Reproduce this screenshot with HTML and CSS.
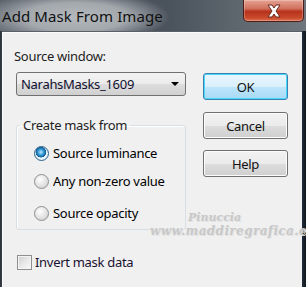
FILE: index.html
```html
<!DOCTYPE html>
<html lang="en">
<head>
    <meta charset="UTF-8">
    <title>Add Mask From Image</title>
    <link rel="stylesheet" href="styles.css">
</head>
<body>

    <div class="window">
        <div class="titlebar">
            <span class="title">Add Mask From Image</span>
            <div class="close-btn">
                <svg width="22" height="16" viewBox="0 0 22 16">
                    <path d="M5 2 L9 2 L11 5 L13 2 L17 2 L13 8 L17 14 L13 14 L11 11 L9 14 L5 14 L9 8 Z"
                          fill="#fff" stroke="#6b2a20" stroke-width="1"/>
                </svg>
            </div>
        </div>

        <div class="client">
            <div class="form">
                <div class="label">Source window:</div>
                <div class="select">
                    <span>NarahsMasks_1609</span>
                    <span class="arrow"></span>
                </div>

                <fieldset class="group">
                    <legend>Create mask from</legend>
                    <div class="radio first"><span class="dot checked"></span>Source luminance</div>
                    <div class="radio"><span class="dot"></span>Any non-zero value</div>
                    <div class="radio third"><span class="dot"></span>Source opacity</div>
                </fieldset>

                <div class="check"><span class="box"></span>Invert mask data</div>
            </div>

            <div class="buttons">
                <div class="btn default">OK</div>
                <div class="btn">Cancel</div>
                <div class="btn">Help</div>
            </div>

            <div class="watermark">
                <span class="wm-name">Pinuccia</span>
                <span class="wm-site">www.maddiregrafica.e</span>
            </div>
        </div>
    </div>

</body>
</html>
```

FILE: styles.css
```css
/* page */
body {
    margin: 0;
    font-family: "Noto Sans", "Open Sans", sans-serif;
    background: #1c2a36;
}

/* window frame */
.window {
    width: 306px;
    height: 287px;
    display: flex;
    flex-direction: column;
    background: linear-gradient(90deg, #2b3038 0, #3a434e 2px, #3a434e 300px, #1f2c3a 302px, #0f1820 306px);
    overflow: hidden;
}

.titlebar {
    height: 31px;
    display: flex;
    justify-content: space-between;
    align-items: flex-start;
    background:
        radial-gradient(ellipse 95px 26px at 75px 17px, #b5b9bd 0%, #a3a8ad 55%, rgba(120,126,133,0) 100%),
        linear-gradient(90deg, #5d646c 0%, #4a525c 55%, #606870 80%, #6f767d 100%);
    flex-shrink: 0;
}

.title {
    font-size: 15px;
    color: #111;
    padding: 6px 0 0 2px;
    letter-spacing: 0.1px;
}

.close-btn {
    width: 59px;
    height: 21px;
    margin-right: 2px;
    border: 1px solid #4f1d17;
    border-top: none;
    border-radius: 0 0 5px 5px;
    background: linear-gradient(#e6a293 0%, #d0735f 40%, #b8321c 55%, #c84a2c 85%, #e07050 100%);
    display: flex;
    justify-content: center;
    align-items: center;
    box-shadow: inset 0 0 0 1px rgba(255,255,255,0.25);
}

/* client area */
.client {
    flex: 1;
    margin: 0 4px 0 2px;
    background: #f0f0f0;
    border-top: 1px solid #5a6068;
    box-shadow: inset 1px 1px 0 #fbfbfb;
    display: flex;
    position: relative;
    font-size: 13px;
    letter-spacing: -0.3px;
    color: #000;
}

.form {
    width: 185px;
    padding: 16px 0 0 12px;
}

.label {
    line-height: 17px;
    color: #1e1e1e;
}

.select {
    margin: 7px 0 0 2px;
    height: 22px;
    border: 1px solid #707070;
    border-radius: 3px;
    background: linear-gradient(#f3f3f3 0%, #ebebeb 50%, #dddddd 50%, #d0d0d0 100%);
    display: flex;
    align-items: center;
    justify-content: space-between;
    padding: 0 6px 0 4px;
    width: 158px;
    color: #101030;
}

.arrow {
    width: 0;
    height: 0;
    border-left: 4px solid transparent;
    border-right: 4px solid transparent;
    border-top: 4px solid #000;
}

/* group box */
.group {
    margin: 21px 0 0 2px;
    width: 170px;
    height: 113px;
    padding: 0;
    border: 1px solid #d5dfe5;
    border-radius: 3px;
    box-sizing: border-box;
    box-shadow: inset 1px 1px 0 #fff;
}

.group legend {
    margin-left: 3px;
    padding: 0 3px;
    line-height: 16px;
    color: #1e1e1e;
}

.radio {
    display: flex;
    align-items: center;
    margin: 12px 0 0 17px;
    height: 16px;
    line-height: 16px;
}

.radio.first {
    margin-top: 12px;
}

.radio.third {
    margin-top: 16px;
}

.dot {
    width: 13px;
    height: 13px;
    border: 1px solid #8e8f8f;
    border-radius: 50%;
    margin-right: 4px;
    background: radial-gradient(circle at 40% 35%, #ffffff 0%, #e2e2e2 55%, #c8c8c8 100%);
    flex-shrink: 0;
}

.dot.checked {
    border-color: #2c628b;
    background:
        radial-gradient(circle at 45% 40%, #bfe8ff 0%, #3ea2dc 25%, #0d5a92 48%, rgba(0,0,0,0) 52%),
        radial-gradient(circle, #e8f3fb 60%, #bfd9ec 100%);
}

/* checkbox */
.check {
    display: flex;
    align-items: center;
    margin: 24px 0 0 3px;
    line-height: 16px;
    color: #1a1030;
}

.box {
    width: 13px;
    height: 13px;
    border: 1px solid #8e8f8f;
    margin-right: 3px;
    background: linear-gradient(135deg, #cfcfcf 0%, #e8e8e8 50%, #f8f8f8 100%);
    box-shadow: inset 0 0 0 1px #f4f4f4;
}

/* buttons */
.buttons {
    display: flex;
    flex-direction: column;
    padding: 41px 0 0 4px;
}

.btn {
    width: 83px;
    height: 25px;
    border: 1px solid #707070;
    border-radius: 3px;
    background: linear-gradient(#f2f2f2 0%, #ebebeb 50%, #dddddd 50%, #cfcfcf 100%);
    box-shadow: inset 0 0 0 1px #fcfcfc;
    display: flex;
    align-items: center;
    justify-content: center;
    margin-bottom: 12px;
    color: #111;
}

.btn + .btn + .btn {
    margin-top: -1px;
}

.btn.default {
    border-color: #3c7fb1;
    background: linear-gradient(#eaf6fd 0%, #d9f0fc 50%, #bee6fd 50%, #a7d9f5 100%);
    box-shadow: inset 0 0 0 1px #48d8fb;
}

/* watermark */
.watermark {
    position: absolute;
    left: 148px;
    top: 180px;
    display: flex;
    flex-direction: column;
    pointer-events: none;
    font-weight: bold;
    color: #c8c8c8;
    text-shadow: 1px 1px 0 #e2e2e2;
    font-family: "DejaVu Serif", serif;
    font-style: italic;
    letter-spacing: 0;
}

.wm-name {
    margin-left: 38px;
    font-size: 11px;
    line-height: 12px;
}

.wm-site {
    font-size: 12px;
    line-height: 14px;
    letter-spacing: 0.4px;
    white-space: nowrap;
}
```
